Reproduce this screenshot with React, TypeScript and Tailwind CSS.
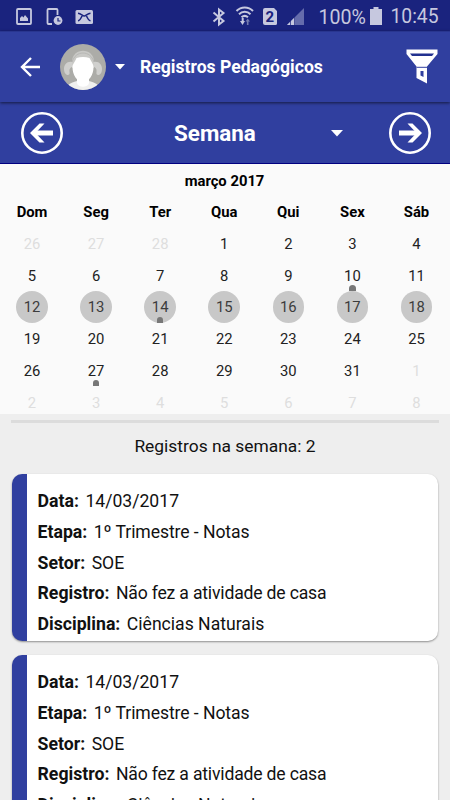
type Day = { day: number; out?: boolean; dot?: boolean; selected?: boolean };

const weekDays = ["Dom", "Seg", "Ter", "Qua", "Qui", "Sex", "Sáb"];

const range = (from: number, to: number, extra: Partial<Day> = {}): Day[] =>
    Array.from({ length: to - from + 1 }, (_, i) => ({
        day: from + i,
        ...extra,
    }));

const days: Day[] = [
    ...range(26, 28, { out: true }),
    ...range(1, 31).map((d) => ({
        ...d,
        selected: d.day >= 12 && d.day <= 18,
        dot: [10, 14, 27].includes(d.day),
    })),
    ...range(1, 8, { out: true }),
];

const record = [
    { label: "Data:", value: "14/03/2017" },
    { label: "Etapa:", value: "1º Trimestre - Notas", style: "tracking-[-0.08px]" },
    { label: "Setor:", value: "SOE" },
    {
        label: "Registro:",
        value: "Não fez a atividade de casa",
        style: "tracking-[-0.18px]",
    },
    { label: "Disciplina:", value: "Ciências Naturais" },
];

function StatusBar() {
    return (
        <div className="flex h-[31px] shrink-0 items-center bg-[#1a237e] text-[20px] text-[#c6c8df]">
            <svg width="110" height="31" viewBox="0 0 110 31" fill="none">
                <rect x="17" y="9" width="14" height="15" rx="1" stroke="#c6c8df" strokeWidth="1.8" />
                <path d="M20 21v-3l2-2 1.500 1.500L25 15l3 3.500V21z" fill="#c6c8df" />
                <path d="M52 24h-3.500a1 1 0 0 1-1-1V10a1 1 0 0 1 1-1h8a1 1 0 0 1 1 1v5" stroke="#c6c8df" strokeWidth="1.8" />
                <circle cx="58" cy="20.500" r="4.400" fill="#c6c8df" />
                <path d="M58 18v3h2.500" stroke="#1a237e" strokeWidth="1.2" />
                <rect x="75.500" y="10" width="17.500" height="14" rx="1.500" fill="#c6c8df" />
                <path d="M78 13.200c3 .3 4.500 2.800 6.200 2.800s3.300-2.500 6.300-2.800M78 20.800c2-.3 3-2.500 4-4.800M90.500 20.800c-2-.3-3-2.500-4-4.800" stroke="#1a237e" strokeWidth="1.500" />
            </svg>
            <svg className="ml-[90px]" width="110" height="31" viewBox="200 0 110 31" fill="none">
                <path d="M213.500 12.500l10 8.500-4.500 3.500v-15l4.500 3.500-10 8.500" stroke="#c6c8df" strokeWidth="2" />
                <g stroke="#c6c8df" strokeWidth="2">
                    <path d="M236.500 11a11.500 11.500 0 0 1 16.500 0" />
                    <path d="M239 14.200a8.200 8.200 0 0 1 11.500 0" />
                    <path d="M241.500 17.300a5 5 0 0 1 6.500 0" />
                </g>
                <path d="M240 21h1.700v-3h2v3h1.300l-2.500 4z" fill="#c6c8df" />
                <path d="M245.500 21.500l2.200-3 2.300 3h-1.500v3.500h-1.600v-3.500z" fill="#747aaf" />
                <path d="M265 8h9l3 3v12.500a1.500 1.500 0 0 1-1.500 1.500H265a2 2 0 0 1-2-2V10a2 2 0 0 1 2-2z" fill="#c6c8df" />
                <path d="M304 8v17h-17z" fill="#656cac" />
                <path d="M295 17v8h-8z" fill="#c6c8df" />
                <path d="M290.500 18v7M294.500 16v9" stroke="#1a237e" strokeWidth="0.7" />
                <text x="265.500" y="22" fontSize="15" fontWeight="700" fill="#1a237e">
                    2
                </text>
            </svg>
            <span className="ml-[8.5px] w-[51.5px] pt-[4px] text-[19.6px]">100%</span>
            <svg width="12" height="18" viewBox="0 0 12 18" className="mt-[1px]">
                <path d="M3.500 0h5v2H12v16H0V2h3.500z" fill="#c6c8df" />
            </svg>
            <span className="ml-[8.5px] pt-[4px] text-[19.3px]">10:45</span>
        </div>
    );
}

function Avatar() {
    return (
        <svg width="46" height="46" viewBox="0 0 46 46" className="ml-[19px] overflow-hidden rounded-full">
            <rect width="46" height="46" fill="#acaca8" />
            {/* hair and pigtails */}
            <path d="M12 18C12 3 34 3 34 18v6H12z" fill="#c9c9c6" />
            <path d="M12 18c-5-1-8 3-8 7 0 3 1 5 3 6 2 .5 3-1 2.500-3-.5-3 1-5 3.500-5zM34 18c5-1 8 3 8 7 0 3-1 5-3 6-2 .5-3-1-2.500-3 .5-3-1-5-3.500-5z" fill="#d0d0ce" />
            <path d="M12 18c2-6 6-9 11-9s9 3 11 9" fill="none" stroke="#b7b7b4" strokeWidth="1" />
            <path d="M5 46c1-5 5-7 12-9h12c7 2 11 4 12 9z" fill="#f0f0ef" />
            <path d="M17 33h12v6c-1 5-11 5-12 0z" fill="#fff" />
            <path d="M12.500 23c0-3 2-4 4-9 4-1.500 9-1.500 13 0 2 4 4 6 4 9 0 8-4.500 15-10.500 15s-10.500-7-10.500-15z" fill="#fff" />
        </svg>
    );
}

function Toolbar() {
    return (
        <div className="z-10 flex h-[71px] shrink-0 items-center border-t border-[#29368f] bg-[#303f9f] text-white shadow-[0_1px_3px_rgba(0,0,0,0.6)]">
            <svg width="21" height="20" viewBox="0 0 21 20" className="ml-[20px]" fill="none" stroke="#fff" strokeWidth="2.400">
                <path d="M20 10H2M11 1L2 10l9 9" />
            </svg>
            <Avatar />
            <svg width="10" height="6" viewBox="0 0 10 6" className="ml-[9px]">
                <path d="M0 0h10L5 5.500z" fill="#fff" />
            </svg>
            <h1 className="ml-[15px] pt-[1px] text-[17.6px] font-bold whitespace-nowrap">
                Registros Pedagógicos
            </h1>
            <svg width="32" height="35" viewBox="0 0 32 35" className="mr-[12px] ml-auto mb-[1px]">
                <path d="M.5.500h31V5L21 17.500v17L10.500 29V17.500L.5 5z" fill="#fff" />
                <path d="M4 4.500h24l-2 2.500h-20z" fill="#22318f" />
                <path d="M10.500 18.300H21" stroke="#303f9f" strokeWidth="1" />
                <path d="M14.500 22h3v6l-3-1.500z" fill="#303f9f" />
            </svg>
        </div>
    );
}

function CircleArrow({ flip }: { flip?: boolean }) {
    return (
        <svg width="42" height="42" viewBox="0 0 42 42" className={flip ? "rotate-180" : ""} fill="none" stroke="#fff">
            <circle cx="21" cy="21" r="19.700" strokeWidth="2.600" />
            <path d="M32 21H13" strokeWidth="5" />
            <path d="M9 21l9.500-9.500h5L14.500 21l9 9.500h-5z" fill="#fff" stroke="none" />
        </svg>
    );
}

function Calendar() {
    return (
        <div className="h-[250px] shrink-0 overflow-hidden bg-[#fafafa] text-[14.8px] text-[#222]">
            <h2 className="h-[32px] pt-[1px] pr-[1px] text-center leading-[32px] font-bold text-black">
                março 2017
            </h2>
            <div className="grid w-[448.5px] auto-rows-[31.7px] grid-cols-7 text-center leading-[32px]">
                {weekDays.map((d) => (
                    <div key={d} className="font-bold text-black">
                        {d}
                    </div>
                ))}
                {days.map((d, i) => (
                    <div key={i} className="relative flex justify-center">
                        <span
                            className={
                                d.selected
                                    ? "w-[31.5px] rounded-full bg-[#c8c8c8] text-[#3c3c3c]"
                                    : d.out
                                      ? "pt-[0.4px] text-[#dedede]"
                                      : "pt-[0.4px]"
                            }
                        >
                            {d.day}
                        </span>
                        {d.dot && (
                            <i className="absolute bottom-0 h-[6px] w-[6.5px] rounded-t-full rounded-b-[3px] bg-[#777]" />
                        )}
                    </div>
                ))}
            </div>
        </div>
    );
}

function RecordCard() {
    return (
        <div className="h-[167px] shrink-0 overflow-hidden rounded-[10px] border-l-[15.500px] border-[#303f9f] bg-white pt-[12px] pl-[10.5px] text-[17.6px] leading-[30.8px] text-[#111] shadow-[0_1px_2px_rgba(0,0,0,0.4)]">
            {record.map(({ label, value, style }) => (
                <p key={label} className="flex gap-[6.5px] whitespace-nowrap">
                    <b className="text-[17.7px]">{label}</b>
                    <span className={style}>{value}</span>
                </p>
            ))}
        </div>
    );
}

export default function App() {
    return (
        <div className="flex h-[800px] w-[450px] flex-col overflow-hidden bg-[#eee] font-['Roboto',sans-serif]">
            <StatusBar />
            <Toolbar />
            <div className="flex h-[62px] shrink-0 items-center border-b border-[#000080] bg-[#303f9f] pr-[19px] pl-[21px] text-white">
                <CircleArrow />
                <h2 className="ml-[111px] pt-[3px] text-[22.4px] font-bold">Semana</h2>
                <svg width="12" height="7" viewBox="0 0 12 7" className="mt-[1px] mr-[46px] ml-auto">
                    <path d="M0 0h12L6 6.500z" fill="#fff" />
                </svg>
                <CircleArrow flip />
            </div>
            <Calendar />
            <div className="mx-[11px] mt-[6px] h-[3px] shrink-0 bg-[#dcdcdc]" />
            <p className="h-[51px] shrink-0 text-center text-[17.4px] leading-[47px] text-[#111]">
                Registros na semana: 2
            </p>
            <div className="flex flex-col gap-[14px] px-[12px]">
                <RecordCard />
                <RecordCard />
            </div>
        </div>
    );
}
